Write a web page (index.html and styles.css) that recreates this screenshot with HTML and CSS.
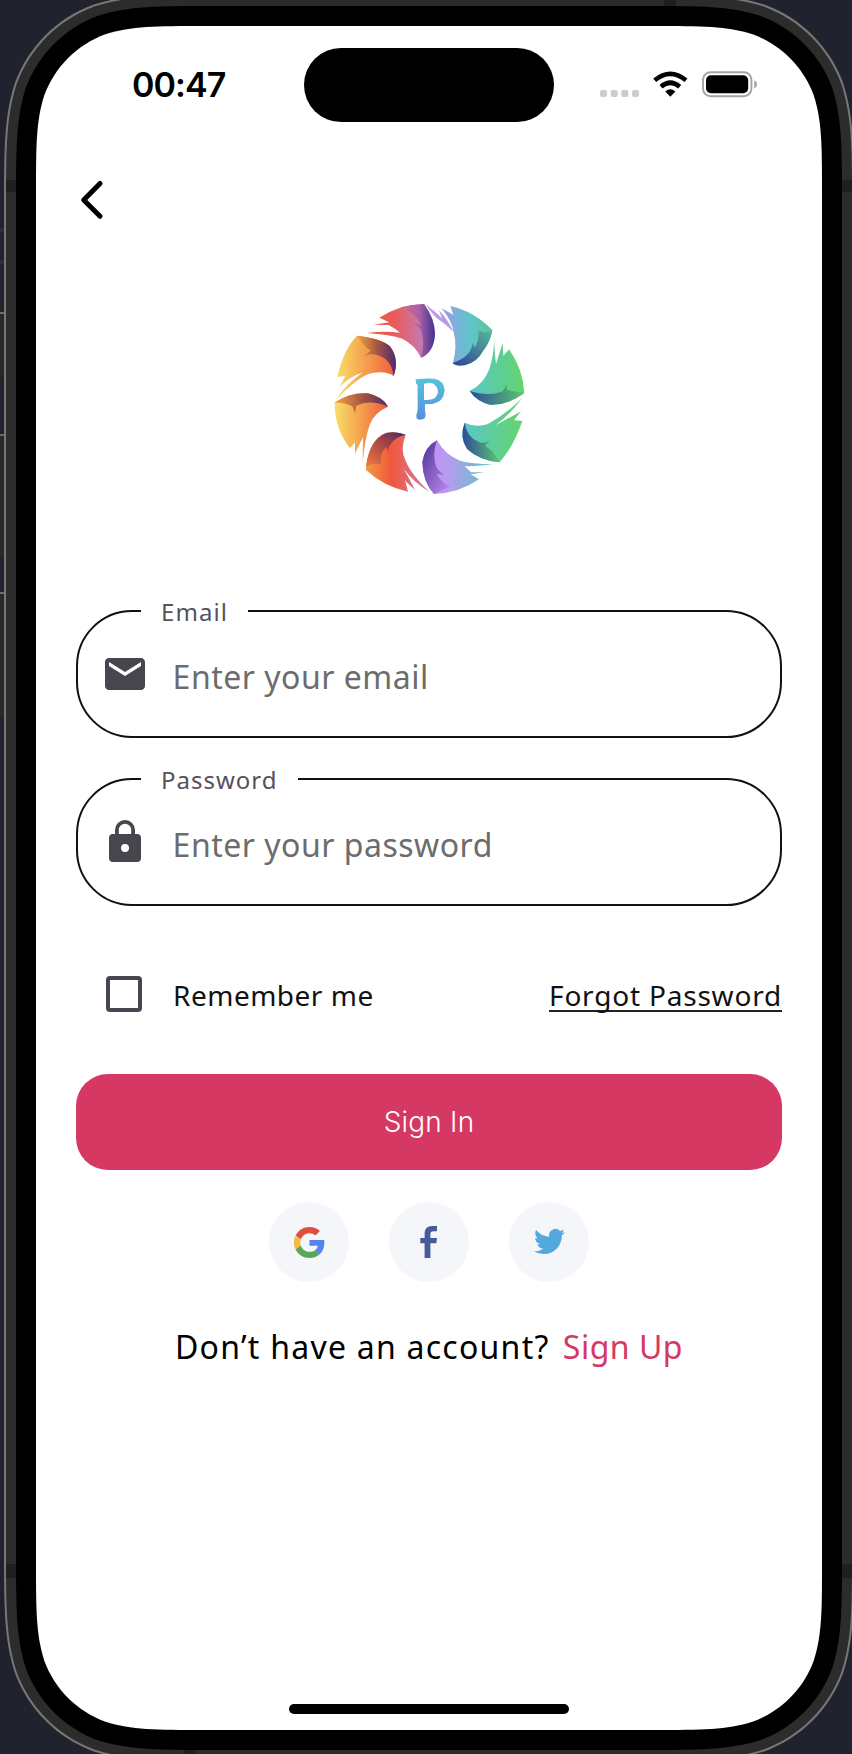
FILE: index.html
```
<!DOCTYPE html>
<html lang="en">
<head>
<meta charset="utf-8">
<title>Sign In</title>
<link rel="stylesheet" href="styles.css">
</head>
<body>
<svg class="device" viewBox="0 0 852 1754" aria-hidden="true">
  <defs>
    <radialGradient id="bg"><stop offset="0" stop-color="#111213"/><stop offset=".86" stop-color="#15161a"/><stop offset="1" stop-color="#20222d"/></radialGradient>
    <g id="quarter">
      <path fill="#777776" d="M4 878V211C4 148.6 4 117.3 14.6 83.7C28 46.9 56.9 18 93.7 4.6C127.3-6 158.6-6 221-6H429V878Z"/>
      <path fill="#2c2c2c" d="M6 878V210C6 148.4 6 117.6 16.5 84.4C29.7 48.2 58.2 19.7 94.4 6.5C127.6-4 158.4-4 220-4H429V878Z"/>
      <path fill="#1f1f1f" d="M6 180h12v12H6z"/>
      <path fill="#000" d="M16 878V204.7C16 147.5 16 118.9 25.7 88.1C38 54.5 64.5 28 98.1 15.7C128.9 6 157.5 6 214.7 6H429V878Z"/>
      <path fill="#fff" d="M36 878V194.2C36 145.7 36 121.5 44.2 95.5C54.6 67 77 44.6 105.5 34.2C131.5 26 155.7 26 204.2 26H429V878Z"/>
    </g>
  </defs>
  <rect width="852" height="1754" fill="#1c1d26"/>
  <rect width="852" height="1754" fill="url(#bg)"/>
  <path fill="#2d2e3a" d="M0 228h4v4H0zM0 260h4v4H0z"/>
  <path fill="#292a28" d="M0 312h4v64H0zM0 434h4v124H0zM0 592h4v124H0z"/>
  <path fill="#6a6b69" d="M0 312h4v2H0zM0 434h4v2H0zM0 592h4v2H0z"/>
  <use href="#quarter"/>
  <use href="#quarter" transform="translate(858 0) scale(-1 1)"/>
  <use href="#quarter" transform="translate(0 1756) scale(1 -1)"/>
  <use href="#quarter" transform="translate(858 1756) scale(-1 -1)"/>
  <path fill="#1f1f1f" d="M664 0h12v6h-12zM184 1750h12v4h-12zM6 1566h10v12H6zM842 1566h10v12h-10z"/>
</svg>
<main class="screen">
  <header class="status">
    <div class="time">00:47</div>
    <div class="island"></div>
    <svg class="indicators" width="160" height="30" viewBox="598 70 160 30">
      <g fill="#ccc"><rect x="600" y="90" width="7" height="7" rx="2"/><rect x="610.7" y="90" width="7" height="7" rx="2"/><rect x="621.3" y="90" width="7" height="7" rx="2"/><rect x="632" y="90" width="7" height="7" rx="2"/></g>
      <g fill="none" stroke="#000" stroke-width="4.6"><path d="M654.7 80.3Q670.3 67.5 686 80.3"/><path d="M661 86.7Q670.3 78.8 679.7 86.7"/></g>
      <path d="M665.3 91.6Q670.3 87 675.4 91.6L670.3 96.7Z"/>
      <rect x="703" y="72.2" width="48.4" height="24" rx="7.5" fill="#fff" stroke="#a5a5a5" stroke-width="2"/>
      <rect x="706" y="75.2" width="42.2" height="18" rx="5"/>
      <path fill="#a5a5a5" d="M754.2 80.3Q757 81.5 757 84.3T754.2 88.5Z"/>
    </svg>
  </header>
  <svg class="back" width="26" height="42" viewBox="0 0 26 42"><path d="M20 4.500L3.700 21L20 37.200" fill="none" stroke="#000" stroke-width="5" stroke-linecap="round" stroke-linejoin="round"/></svg>
  <svg class="logo" width="220" height="220" viewBox="0 0 660 660">
    <defs>
      <linearGradient id="a"><stop stop-color="#f2563a"/><stop offset=".4" stop-color="#e85b58"/><stop offset="1" stop-color="#b886d8"/></linearGradient>
      <linearGradient id="b"><stop stop-color="#9b9ce5"/><stop offset=".55" stop-color="#62c3cd"/><stop offset="1" stop-color="#58c695"/></linearGradient>
      <linearGradient id="c"><stop stop-color="#57c8cb"/><stop offset="1" stop-color="#64d46c"/></linearGradient>
      <linearGradient id="d"><stop stop-color="#c78bf5"/><stop offset=".35" stop-color="#b79bf0"/><stop offset="1" stop-color="#55c8c3"/></linearGradient>
      <linearGradient id="e"><stop stop-color="#f39a42"/><stop offset=".4" stop-color="#f0583b"/><stop offset="1" stop-color="#cf7fb0"/></linearGradient>
      <linearGradient id="f"><stop stop-color="#f8df68"/><stop offset=".6" stop-color="#f39249"/><stop offset="1" stop-color="#ee5942"/></linearGradient>
      <linearGradient id="p" x2="0" y2="1"><stop stop-color="#54c4d5"/><stop offset="1" stop-color="#598de4"/></linearGradient>
      <linearGradient id="sa"><stop stop-color="#d96a80"/><stop offset=".55" stop-color="#a860a8"/><stop offset="1" stop-color="#443290"/></linearGradient>
      <linearGradient id="sb" x1="1" x2="0" y2="1"><stop stop-color="#57b99e"/><stop offset="1" stop-color="#304092"/></linearGradient>
      <linearGradient id="sc" x1="1" x2="0"><stop stop-color="#5bc66f"/><stop offset="1" stop-color="#304b9b"/></linearGradient>
      <linearGradient id="sf"><stop stop-color="#f3a441"/><stop offset=".5" stop-color="#a8573f"/><stop offset="1" stop-color="#4e2b70"/></linearGradient>
      <linearGradient id="se" x1="0" y1="1" x2="1" y2="0"><stop stop-color="#ef7b3e"/><stop offset=".6" stop-color="#9f4147"/><stop offset="1" stop-color="#412b70"/></linearGradient>
      <linearGradient id="sd" y2="1"><stop stop-color="#4a3595"/><stop offset="1" stop-color="#c58cf1"/></linearGradient>
    </defs>
    <path fill="url(#a)" d="M178 83Q235 45 312 42Q344 85 345 132Q342 187 303 203Q285 165 247 146Q212 134 140 129Q195 122 240 128Q226 116 206 105L161 104L208 97Z"/>
    <path fill="url(#sa)" d="M241 52Q276 43 312 42Q344 85 345 132Q342 187 303 203Q315 160 304 124Q298 109 278 97L304 106Q287 67 241 52Z"/>
    <path fill="#b99be9" d="M317 43Q350 69 366 85L357 61Q382 86 401 126Q375 100 350 84Q334 69 317 43Z"/>
    <path fill="url(#b)" d="M365 55L400 74L391 48Q461 63 517 120Q511 155 491 180Q471 218 434 226L398 222Q413 170 401 126Q397 96 365 55Z"/>
    <path fill="url(#sb)" d="M517 120Q511 155 491 180Q471 218 434 226Q408 230 398 219Q455 199 458 158L464 173Q476 157 476 121Q496 134 517 120Z"/>
    <path fill="url(#c)" d="M523 138Q522 173 528 222L548 159L550 197L567 178Q608 235 613 309Q562 347 510 344Q469 334 449 303Q490 283 507 239Q522 199 523 138Z"/>
    <path fill="url(#sc)" d="M613 309Q562 347 510 344Q469 334 449 303Q505 320 545 305Q555 299 559 281L561 300Q583 304 613 309Z"/>
    <path fill="url(#c)" d="M607 323Q571 373 526 406L603 364L582 391L607 393Q582 467 539 517Q480 513 442 478Q417 441 434 398Q467 414 502 403Q557 374 607 323Z"/>
    <path fill="url(#sc)" d="M539 517Q480 513 442 478Q417 441 434 398Q439 440 478 457Q493 462 509 451L495 467Q519 479 539 517Z"/>
    <path fill="url(#d)" d="M351 451Q376 495 420 512Q455 522 519 523Q466 530 434 528L453 547H494L452 553L477 568Q416 610 342 612Q309 578 307 516Q315 469 351 451Z"/>
    <path fill="url(#sd)" d="M351 451Q336 492 348 529Q355 545 374 555L350 552Q366 581 391 590L342 612Q309 578 307 516Q315 469 351 451Z"/>
    <path fill="url(#e)" d="M138 530Q148 449 198 429Q229 422 257 434Q239 481 257 512Q272 552 329 606Q280 577 252 537L285 599Q260 579 255 569L264 605Q192 590 138 540Z"/>
    <path fill="url(#se)" d="M138 530Q148 449 198 429Q229 422 257 434Q208 446 204 486L199 471Q181 485 182 522Q159 516 138 530Z"/>
    <path fill="url(#f)" d="M44 337Q91 306 144 310Q190 321 204 350Q163 367 149 404Q136 440 128 517L129 441L105 491L105 457L90 475Q43 416 44 337Z"/>
    <path fill="url(#sf)" d="M44 337Q91 306 144 310Q190 321 204 350Q150 327 109 347L105 368L97 348Q72 338 44 337Z"/>
    <path fill="url(#f)" d="M52 261Q69 181 111 137Q184 145 210 169Q239 209 221 258Q198 242 158 249Q121 253 48 330Q72 287 127 248Q90 259 59 290L76 257Z"/>
    <path fill="url(#sf)" d="M111 137Q184 145 210 169Q239 209 221 258Q215 205 169 194Q151 190 132 198L153 181Q133 173 111 137Z"/>
    <path fill="url(#p)" fill-rule="evenodd" d="M287 268Q316 264 344 266Q372 272 374 301Q371 337 337 342L315 343V360Q319 374 315 384Q306 391 293 388Q287 383 290 371L293 361V286L288 280ZM312 281V330Q328 331 341 326Q354 318 354 303Q350 280 329 278Z"/>
  </svg>
  <form class="form">
    <label class="field"><span class="tag email">Email</span>
      <svg class="icon" width="48" height="48" viewBox="0 0 24 24"><path d="M20 4H4C2.9 4 2 4.9 2 6v12c0 1.100.9 2 2 2h16c1.100 0 2-.9 2-2V6c0-1.100-.9-2-2-2zm0 4-8 5-8-5V6l8 5 8-5v2z"/></svg>
      <span class="hint he">Enter your email</span></label>
    <label class="field"><span class="tag pass">Password</span>
      <svg class="icon" width="48" height="48" viewBox="0 0 24 24"><path d="M18 8h-1V6A5 5 0 0 0 7 6v2H6a2 2 0 0 0-2 2v10a2 2 0 0 0 2 2h12a2 2 0 0 0 2-2V10a2 2 0 0 0-2-2zm-6 9a2 2 0 1 1 0-4 2 2 0 0 1 0 4zM8.900 8V6a3.100 3.100 0 0 1 6.200 0v2H8.900z"/></svg>
      <span class="hint hp">Enter your password</span></label>
    <div class="options"><span class="check"></span><span class="remember">Remember me</span><a class="forgot">Forgot Password</a></div>
    <button class="submit" type="button">Sign In</button>
  </form>
  <div class="social">
    <span class="disc"><svg width="31" height="31" viewBox="0 0 48 48"><path fill="#db4f40" d="M24 9.500c3.500 0 6.700 1.200 9.200 3.600l6.900-6.900C35.900 2.400 30.500 0 24 0 14.600 0 6.500 5.400 2.600 13.200l8 6.200C12.400 13.700 17.700 9.500 24 9.500z"/><path fill="#5383ec" d="M47 24.500c0-1.600-.2-3.100-.4-4.500H24v9h12.900c-.6 3-2.300 5.500-4.800 7.200l7.700 6C44.400 38 47 31.800 47 24.500z"/><path fill="#f0bd42" d="M10.500 28.600a14.500 14.500 0 0 1 0-9.200l-8-6.200a24 24 0 0 0 0 21.600l8-6.200z"/><path fill="#58a55c" d="M24 48c6.500 0 11.900-2.100 15.900-5.800l-7.700-6c-2.200 1.500-4.900 2.300-8.200 2.300-6.300 0-11.600-4.200-13.500-9.900l-8 6.200C6.500 42.600 14.600 48 24 48z"/></svg></span>
    <span class="disc"><svg width="32" height="32" viewBox="0 0 32 32"><path fill="#445c99" d="M11.600 32V17.300H7.300V12h4.300V8C11.600 2.800 14.200 0 19.200 0H24v5.200h-3.300c-2.500 0-3.300 1-3.300 3.200V12H24l-.7 5.300h-5.900V32z"/></svg></span>
    <span class="disc twitter"><svg width="31" height="31" viewBox="0 0 24 24"><path fill="#53a8dd" d="M23.950 4.570a10 10 0 0 1-2.820.775 4.960 4.960 0 0 0 2.160-2.723c-.95.555-2.005.959-3.127 1.184a4.920 4.920 0 0 0-8.384 4.482C7.690 8.095 4.067 6.130 1.640 3.162a4.820 4.820 0 0 0-.666 2.475c0 1.710.87 3.213 2.188 4.096a4.900 4.900 0 0 1-2.228-.616v.06a4.920 4.920 0 0 0 3.946 4.827 5 5 0 0 1-2.212.085 4.940 4.940 0 0 0 4.604 3.417 9.870 9.870 0 0 1-6.102 2.105c-.39 0-.779-.023-1.170-.067a14 14 0 0 0 7.557 2.209c9.053 0 13.998-7.496 13.998-13.985 0-.21 0-.42-.015-.63a9.940 9.940 0 0 0 2.460-2.548z"/></svg></span>
  </div>
  <p class="signup"><span class="ask">Don’t have an account?</span><a class="up">Sign Up</a></p>
  <div class="home"></div>
</main>
</body>
</html>
```
FILE: styles.css
```
* { box-sizing: border-box; }
body { margin: 0; width: 852px; height: 1754px; overflow: hidden; background: #1c1d26; font-family: "Noto Sans", sans-serif; color: #111; }
.device { position: absolute; left: 0; top: 0; width: 852px; height: 1754px; display: block; }
.screen { position: relative; display: flex; flex-direction: column; width: 786px; height: 1704px; margin: 26px 0 0 36px; padding: 0 40px; white-space: nowrap; }
.status { display: flex; height: 96px; padding-top: 22px; }
.time { width: 228px; padding-left: 56px; font: 600 34px/74px Inter, sans-serif; color: #000; letter-spacing: -.9px; }
.island { width: 250px; height: 74px; border-radius: 37px; background: #000; }
.indicators { margin: 22px 0 0 44px; flex: none; }
.back { margin: 57px 0 0 4px; flex: none; }
.logo { margin: 69px 0 0 244px; flex: none; }
.form { display: flex; flex-direction: column; margin-top: 100px; }
.field { display: flex; position: relative; height: 128px; margin-bottom: 40px; padding: 38px 0 0 22.6px; border: 2px solid #111; border-radius: 56px; }
.icon { fill: #49454f; flex: none; }
.tag { position: absolute; left: 63px; top: -15px; padding-left: 20px; background: #fff; color: #55525b; font-size: 24px; line-height: 30px; }
.email { width: 107px; letter-spacing: 1.1px; }
.pass { width: 157px; letter-spacing: 1px; }
.hint { margin-left: 24px; padding-top: 5px; font-size: 32px; line-height: 44px; color: #6c6c6c; }
.he { letter-spacing: .5px; }
.hp { letter-spacing: .5px; }
.options { display: flex; height: 40px; margin: 28px 0 60px; padding-left: 30px; font-size: 28px; line-height: 42px; }
.check { width: 36px; height: 36px; margin: 2px 31px 0 0; border: 4px solid #49454f; border-radius: 4px; }
.remember { letter-spacing: .5px; }
.forgot { margin-left: auto; height: 38px; border-bottom: 2px solid #222; letter-spacing: .8px; }
.submit { height: 96px; padding: 0; border: 0; border-radius: 32px; background: #d63864; color: #fff; font: 300 28px/96px Inter, sans-serif; letter-spacing: .2px; }
.social { display: flex; justify-content: center; gap: 40px; margin-top: 32px; }
.disc { display: flex; align-items: center; justify-content: center; width: 80px; height: 80px; border-radius: 50%; background: #f5f6fa; }
.twitter { padding-bottom: 2px; }
.signup { display: flex; justify-content: space-between; width: 508px; margin: 41px 0 0 99px; font-size: 32px; line-height: 48px; color: #000; }
.ask { letter-spacing: 1.25px; }
.up { color: #d63864; letter-spacing: .5px; }
.home { width: 280px; height: 10px; margin: auto auto 16px; border-radius: 5px; background: #000; }
```
